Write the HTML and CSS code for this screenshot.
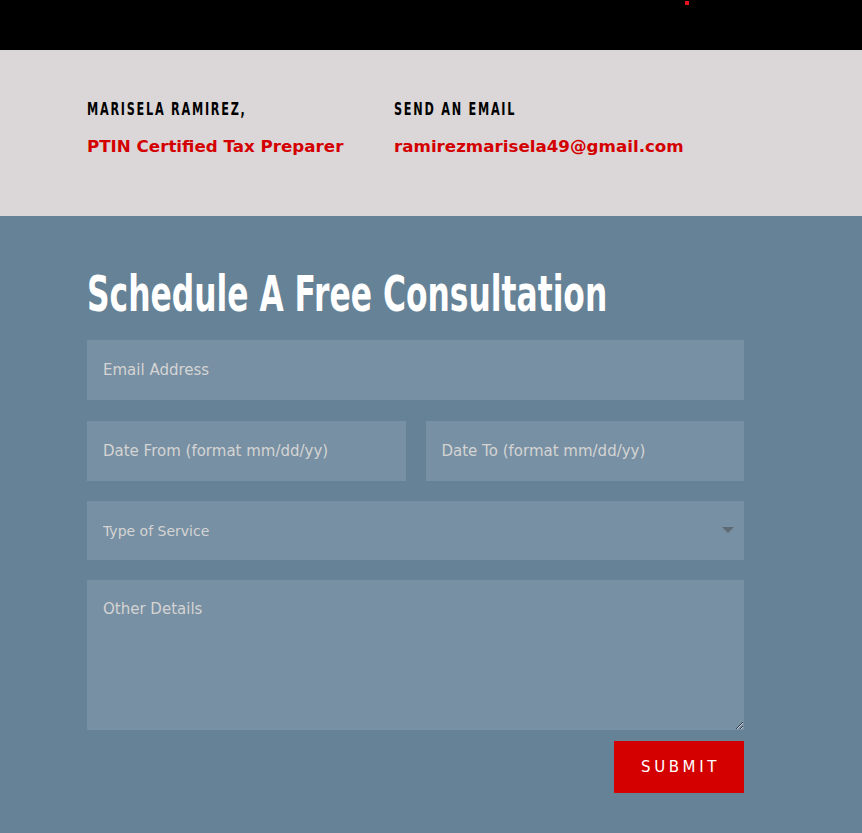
FILE: index.html
```html
<!DOCTYPE html>
<html>
<head>
<meta charset="utf-8">
<link rel="stylesheet" href="styles.css">
</head>
<body>
<header class="topbar"><span class="dot"></span></header>
<section class="contact">
  <div class="col col-name">
    <h4 class="label"><span class="narrow">Marisela Ramirez,</span></h4>
    <p class="value">PTIN Certified Tax Preparer</p>
  </div>
  <div class="col">
    <h4 class="label"><span class="narrow">Send an Email</span></h4>
    <p class="value">ramirezmarisela49@gmail.com</p>
  </div>
</section>
<section class="consult">
  <h2 class="title"><span class="title-text">Schedule A Free Consultation</span></h2>
  <form class="form">
    <input class="field" type="text" placeholder="Email Address">
    <div class="row">
      <input class="field" type="text" placeholder="Date From (format mm/dd/yy)">
      <input class="field" type="text" placeholder="Date To (format mm/dd/yy)">
    </div>
    <div class="select-wrap">
      <select class="field select">
        <option>Type of Service</option>
      </select>
      <span class="caret"></span>
    </div>
    <textarea class="field area" placeholder="Other Details"></textarea>
    <div class="actions"><button class="submit" type="button">Submit</button></div>
  </form>
</section>
</body>
</html>
```
FILE: styles.css
```css
* { box-sizing: border-box; }
html, body { margin: 0; padding: 0; background: #668296; overflow-x: hidden; }
body { font-family: "DejaVu Sans", sans-serif; }
.topbar { height: 50px; background: #000; position: relative; }
.dot { position: absolute; left: 685px; top: 1px; width: 4px; height: 4px; background: #e8141c; }
.contact { background: #dbd6d7; height: 166px; padding: 50px 0 0 87px; display: flex; }
.col-name { width: 307px; }
.label { margin: 0; font-family: "DejaVu Sans", sans-serif; font-weight: 700; font-size: 18px; letter-spacing: 2.8px; text-transform: uppercase; color: #000; line-height: 18px; white-space: nowrap; }
.narrow { display: inline-block; transform: scaleX(0.625); transform-origin: left center; }
.value { margin: 18px 0 0; font-family: "DejaVu Sans", sans-serif; font-weight: 700; font-size: 16.7px; color: #d40000; line-height: 20px; white-space: nowrap; }
.consult { padding: 48px 118px 40px 87px; }
.title { margin: 0 0 16px; font-family: "DejaVu Sans", sans-serif; font-weight: 700; font-size: 50px; line-height: 60px; color: #fff; white-space: nowrap; overflow: hidden; }
.title-text { display: inline-block; transform: scaleX(0.627); transform-origin: left center; }
.form { display: flex; flex-direction: column; gap: 20px; }
.row { display: flex; gap: 20px; margin-top: 1px; }
.row .field { flex: 1; min-width: 0; }
.field { display: block; width: 100%; height: 60px; border: 0; outline: 0; background: #7890a3; color: #d4d4d4; font-family: "DejaVu Sans", sans-serif; font-size: 15px; padding: 0 16px; border-radius: 0; margin: 0; }
.field::placeholder { color: #d4d4d4; }
.select-wrap { position: relative; }
.select { appearance: none; -webkit-appearance: none; color: #d4d4d4; font-size: 14px; height: 59px; }
.caret { position: absolute; right: 10px; top: 26px; width: 0; height: 0; border-left: 6px solid transparent; border-right: 6px solid transparent; border-top: 6px solid #5e6a73; }
.area { height: 150px; padding-top: 20px; resize: vertical; }
.actions { display: flex; justify-content: flex-end; margin-top: -9px; }
.submit { width: 130px; height: 52px; background: #d40000; color: #fff; border: 0; font-family: "DejaVu Sans", sans-serif; font-size: 15px; font-weight: 400; letter-spacing: 3.6px; text-transform: uppercase; padding: 0 0 0 3px; }
```
